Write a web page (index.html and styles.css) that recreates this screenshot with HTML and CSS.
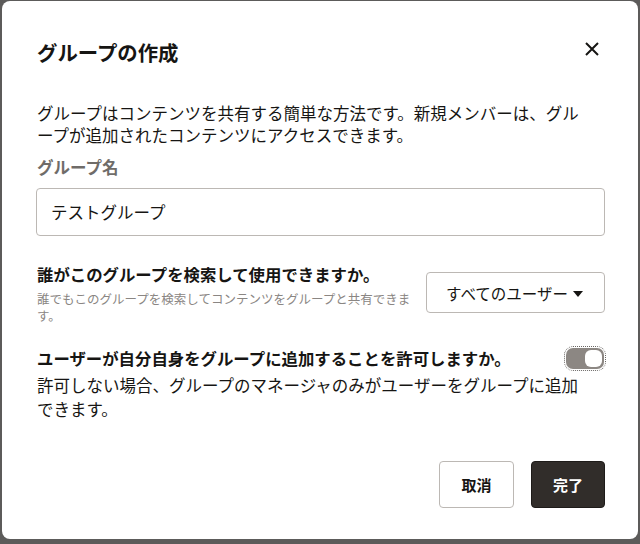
FILE: index.html
```html
<!DOCTYPE html>
<html lang="ja">
<head>
    <meta charset="UTF-8">
    <meta name="viewport" content="width=device-width, initial-scale=1.0">
    <title>グループの作成</title>
    <link rel="stylesheet" href="styles.css">
</head>
<body>
    <div class="dialog">
        <div class="dialog-header">
            <h1>グループの作成</h1>
            <button class="close" aria-label="閉じる">
                <svg width="16" height="16" viewBox="0 0 16 16">
                    <path d="M2 2 L14 14 M14 2 L2 14" stroke="#161513" stroke-width="2" fill="none"/>
                </svg>
            </button>
        </div>

        <p class="intro">グループはコンテンツを共有する簡単な方法です。新規メンバーは、グループが追加されたコンテンツにアクセスできます。</p>

        <label class="field-label" for="groupName">グループ名</label>
        <input type="text" id="groupName" class="text-input" value="テストグループ">

        <div class="option-row">
            <div class="option-text">
                <div class="option-title">誰がこのグループを検索して使用できますか。</div>
                <div class="option-hint">誰でもこのグループを検索してコンテンツをグループと共有できます。</div>
            </div>
            <div class="select">
                <span>すべてのユーザー</span>
                <span class="caret"></span>
            </div>
        </div>

        <div class="toggle-row">
            <div class="option-title">ユーザーが自分自身をグループに追加することを許可しますか。</div>
            <div class="toggle"><span class="knob"></span></div>
        </div>
        <p class="toggle-desc">許可しない場合、グループのマネージャのみがユーザーをグループに追加できます。</p>

        <div class="actions">
            <button class="btn">取消</button>
            <button class="btn btn-primary">完了</button>
        </div>
    </div>
</body>
</html>
```

FILE: styles.css
```css
body {
    margin: 0;
    padding: 1px 2px 5px 2px;
    background-color: #5c5b5a;
    font-family: "Noto Sans CJK JP", "Noto Sans", sans-serif;
    color: #161513;
    text-spacing-trim: space-all;
}
.dialog {
    background: #fff;
    border-radius: 8px;
    height: 538px;
    box-sizing: border-box;
    padding: 37px 33px 0 34px;
}
.dialog-header {
    display: flex;
    justify-content: space-between;
    align-items: flex-start;
}
h1 {
    margin: 0;
    font-size: 20.4px;
    line-height: 28px;
    font-weight: 700;
    padding-left: 1px;
}
.close {
    background: none;
    border: none;
    padding: 0;
    margin: 3px 5px 0 0;
    width: 16px;
    height: 16px;
    cursor: pointer;
}
.intro {
    max-width: 552px;
    margin: 36px 0 0 1px;
    font-size: 16.5px;
    line-height: 22px;
}
.field-label {
    display: block;
    margin: 10px 0 0 1px;
    font-size: 16.5px;
    line-height: 22px;
    font-weight: 700;
    color: #6f6c69;
}
.text-input {
    display: block;
    box-sizing: border-box;
    width: 100%;
    height: 48px;
    margin-top: 10px;
    padding: 0 14px;
    border: 1px solid #bcb8b4;
    border-radius: 4px;
    font-family: inherit;
    font-size: 16.5px;
    color: #161513;
}
.option-row {
    display: flex;
    gap: 12px;
    margin-top: 27px;
}
.option-text {
    flex: 1;
    padding-left: 1px;
}
.option-title {
    font-size: 16.4px;
    line-height: 22px;
    font-weight: 700;
}
.option-hint {
    margin-top: 5px;
    font-size: 12.5px;
    line-height: 17px;
    color: #8a8683;
}
.select {
    display: flex;
    align-items: center;
    justify-content: space-between;
    box-sizing: border-box;
    width: 179px;
    height: 41px;
    margin-top: 9px;
    padding: 0 21px 0 19px;
    border: 1px solid #bcb8b4;
    border-radius: 4px;
    font-size: 15.5px;
}
.caret {
    width: 0;
    height: 0;
    border-left: 5px solid transparent;
    border-right: 5px solid transparent;
    border-top: 6px solid #161513;
    margin-top: 2px;
}
.toggle-row {
    display: flex;
    justify-content: space-between;
    align-items: flex-start;
    margin-top: 23px;
    padding-left: 1px;
}
.toggle {
    box-sizing: border-box;
    width: 38px;
    height: 21px;
    margin: 1px 1px 0 0;
    padding: 2px;
    border-radius: 7px;
    background: #8c8783;
    outline: 1px dotted #6a6764;
    outline-offset: 1px;
    display: flex;
    justify-content: flex-end;
}
.knob {
    width: 17px;
    height: 17px;
    border-radius: 6px;
    background: #fff;
}
.toggle-desc {
    max-width: 552px;
    margin: 4px 0 0 1px;
    font-size: 16.5px;
    line-height: 24px;
}
.actions {
    display: flex;
    justify-content: flex-end;
    gap: 17px;
    margin-top: 40px;
}
.btn {
    height: 47px;
    width: 75px;
    border: 1px solid #bcb8b4;
    border-radius: 4px;
    background: #fff;
    font-family: inherit;
    font-size: 15px;
    font-weight: 700;
    color: #161513;
    cursor: pointer;
}
.btn-primary {
    width: 74px;
    background: #312d2a;
    border-color: #1e1b19;
    color: #fff;
}
```
